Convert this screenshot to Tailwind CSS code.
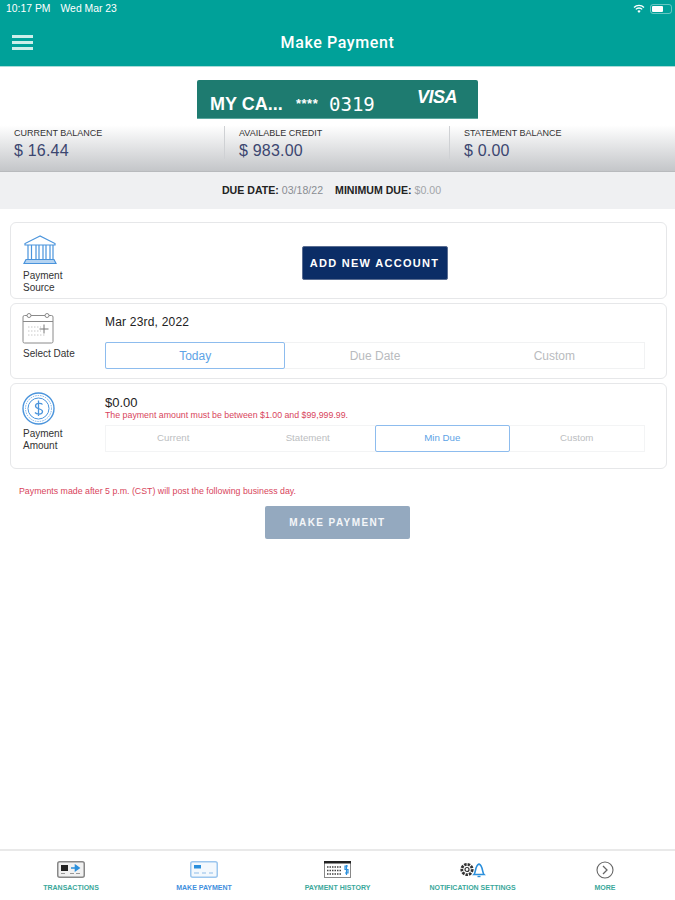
<!DOCTYPE html>
<html lang="en">
<head>
    <meta charset="UTF-8">
    <title>Make Payment</title>
    <script src="https://cdn.jsdelivr.net/npm/@tailwindcss/browser@4"></script>
</head>
<body class="bg-white font-['Liberation_Sans',sans-serif] text-[#1c1c1c]">
<div class="w-[675px] h-[900px] flex flex-col overflow-hidden">

    <!-- Header -->
    <header class="h-[67px] shrink-0 bg-[#00a199] border-b border-[#a9dcd8] text-white">
        <div class="h-[17px] pl-[6px] pr-[3px] flex items-center justify-between text-[10.400px]">
            <div class="flex gap-[10px]"><span>10:17 PM</span><span>Wed Mar 23</span></div>
            <div class="flex items-center gap-[5px]">
                <svg width="12" height="10" viewBox="0 0 12 10" fill="none" stroke="white" stroke-width="1.3"><path d="M1 3.5a7 7 0 0 1 10 0M2.8 5.4a4.4 4.4 0 0 1 6.4 0"/><path d="M4.400 7a2.200 2.200 0 0 1 3.200 0L6 9z" fill="white" stroke="none"/></svg>
                <div class="w-[22px] h-[10px] rounded-[3px] border border-white/40 p-[1px]"><div class="w-[11px] h-full bg-white rounded-[1px]"></div></div>
            </div>
        </div>
        <div class="relative h-[49px] flex items-center justify-center">
            <div class="absolute left-[12px] top-[18px] w-[21px] flex flex-col gap-[3px]">
                <div class="h-[3px] bg-[#cdeeea]"></div>
                <div class="h-[3px] bg-[#cdeeea]"></div>
                <div class="h-[3px] bg-[#cdeeea]"></div>
            </div>
            <h1 class="text-[16px] font-['Roboto',sans-serif] font-medium tracking-[0.6px] mt-[2px]">Make Payment</h1>
        </div>
    </header>

    <!-- Card -->
    <div class="pt-[13px] flex justify-center">
        <div class="w-[281px] h-[39px] bg-[#1e7b70] rounded-t-[2px] border-b border-[#5ba89f] text-white">
            <div class="h-full pl-[13px] pt-[10px] flex items-center">
                <span class="w-[86px] text-[18px] font-bold">MY CA...</span>
                <span class="w-[33px] text-[13px] font-bold tracking-[0.5px]">****</span>
                <span class="w-[88px] text-[19px] font-['DejaVu_Sans_Mono',monospace] font-extralight leading-none">0319</span>
                <span class="text-[18px] font-bold italic -mt-[14px] tracking-[-0.5px]">VISA</span>
            </div>
        </div>
    </div>

    <!-- Balances -->
    <div class="h-[53px] shrink-0 grid grid-cols-3 bg-linear-to-b from-white from-[12%] to-[#c4c6c9] border-b border-[#b8babd]">
        <div class="mt-[7px] h-[33px] pl-[14px] border-r border-[#cfd1d4]">
            <p class="text-[9px] leading-[14px] text-[#333]">CURRENT BALANCE</p>
            <p class="mt-[1px] text-[16px] leading-[20px] text-[#3b4670] tracking-[0.2px]">$ 16.44</p>
        </div>
        <div class="mt-[7px] h-[33px] pl-[14px] border-r border-[#cfd1d4]">
            <p class="text-[9px] leading-[14px] text-[#333]">AVAILABLE CREDIT</p>
            <p class="mt-[1px] text-[16px] leading-[20px] text-[#3b4670] tracking-[0.2px]">$ 983.00</p>
        </div>
        <div class="mt-[7px] h-[33px] pl-[14px]">
            <p class="text-[9px] leading-[14px] text-[#333]">STATEMENT BALANCE</p>
            <p class="mt-[1px] text-[16px] leading-[20px] text-[#3b4670] tracking-[0.2px]">$ 0.00</p>
        </div>
    </div>

    <!-- Due date -->
    <div class="h-[37px] shrink-0 bg-[#eff0f2] flex items-center justify-center pr-[12px] text-[10.600px] gap-[12px]">
        <span><b class="font-bold text-[#222]">DUE DATE:</b> <span class="text-[#8a8d92]">03/18/22</span></span>
        <span><b class="font-bold text-[#222]">MINIMUM DUE:</b> <span class="text-[#a2a5a9]">$0.00</span></span>
    </div>

    <!-- Form rows -->
    <div class="pt-[13px] pl-[10px] pr-[8px] flex flex-col gap-[4px]">

        <section class="h-[77px] rounded-[6px] border border-[#e6e7e9] flex">
            <div class="w-[94px] shrink-0 pl-[12px] pt-[12px]">
                <svg width="34" height="30" viewBox="0 0 34 30" fill="none" stroke="#4a94dc" stroke-width="1.200">
                    <path d="M17 1 2 8.500v1.500h30V8.500zM5 10v14M8.500 10v14M13 10v14M16 10v14M20 10v14M23 10v14M27 10v14M30 10v14"/>
                    <path d="M3 24.500h28L33 28.500H1z" fill="#b5d4f2"/>
                </svg>
                <p class="mt-[5px] text-[10px] leading-[11.500px] text-[#333]">Payment<br>Source</p>
            </div>
            <div class="flex-1 flex justify-center pt-[23px] pr-[22px]">
                <button class="w-[146px] h-[34px] bg-[#0b2d66] rounded-[2px] border border-[#5a6d91] text-white text-[11px] font-bold tracking-[1.300px]">ADD NEW ACCOUNT</button>
            </div>
        </section>

        <section class="h-[76px] rounded-[6px] border border-[#e6e7e9] flex">
            <div class="w-[94px] shrink-0 pl-[11px] pt-[8px]">
                <svg width="32" height="32" viewBox="0 0 32 32" fill="none" stroke="#8a8a8a" stroke-width="1">
                    <rect x="1" y="3.500" width="30" height="27.500" rx="1.500"/>
                    <path d="M1 9.500h30" />
                    <circle cx="7" cy="3.500" r="2" fill="white"/><circle cx="25" cy="3.500" r="2" fill="white"/>
                    <path d="M6 15h13M6 19h13M6 23h18" stroke="#c8c8c8" stroke-dasharray="1.500 1.500"/>
                    <path d="M22 12.500v9M17.500 17h9" stroke="#777"/>
                </svg>
                <p class="mt-[4px] pl-px text-[10px] leading-[11.500px] text-[#333]">Select Date</p>
            </div>
            <div class="flex-1 pt-[11px]">
                <p class="text-[12px] leading-[14px] text-[#222] tracking-[0.2px]">Mar 23rd, 2022</p>
                <div class="mt-[13px] w-[540px] h-[27px] grid grid-cols-3 border border-[#f1f2f3] text-[12px] text-[#b9bbbe]">
                    <div class="-my-px -ml-px flex items-center justify-center border border-[#8dbcee] rounded-[2px] bg-white text-[#5da3e6]">Today</div>
                    <div class="flex items-center justify-center">Due Date</div>
                    <div class="flex items-center justify-center">Custom</div>
                </div>
            </div>
        </section>

        <section class="h-[86px] rounded-[6px] border border-[#e6e7e9] flex">
            <div class="w-[94px] shrink-0 pl-[11px] pt-[8px]">
                <svg width="33" height="33" viewBox="0 0 33 33" fill="none" stroke="#4a94dc">
                    <circle cx="16.500" cy="16.500" r="15.500" stroke-width="1.400"/>
                    <circle cx="16.500" cy="16.500" r="13" stroke-width="0.700" stroke-dasharray="1.500 1"/>
                    <circle cx="16.500" cy="16.500" r="10.500" stroke-width="1"/>
                    <path d="M20.500 12.500c-1-1.500-7-2-7 1.500s7 2 7 5.500-6 3-7.500 1M16.500 8.500v15.500" stroke-width="1.300"/>
                </svg>
                <p class="mt-[3px] pl-px text-[10px] leading-[11.500px] text-[#333]">Payment<br>Amount</p>
            </div>
            <div class="flex-1 pt-[12px]">
                <p class="text-[13px] leading-[14px] font-medium text-[#222]">$0.00</p>
                <p class="text-[8.800px] leading-[10px] text-[#d8455c]">The payment amount must be between $1.00 and $99,999.99.</p>
                <div class="mt-[5px] w-[540px] h-[27px] grid grid-cols-4 border border-[#f3f4f5] text-[9.700px] text-[#bcbec1]">
                    <div class="flex items-center justify-center">Current</div>
                    <div class="flex items-center justify-center">Statement</div>
                    <div class="-my-px flex items-center justify-center border border-[#8dbcee] rounded-[2px] bg-white text-[#5da3e6]">Min Due</div>
                    <div class="flex items-center justify-center">Custom</div>
                </div>
            </div>
        </section>
    </div>

    <p class="mt-[17px] pl-[19px] text-[8.800px] leading-[10px] text-[#d8455c]">Payments made after 5 p.m. (CST) will post the following business day.</p>

    <div class="mt-[10px] flex justify-center">
        <button class="w-[145px] h-[33px] bg-[#94a9bf] rounded-[2px] text-white/90 text-[10px] font-bold tracking-[1.400px]">MAKE PAYMENT</button>
    </div>

    <!-- Tab bar -->
    <nav class="mt-auto h-[51px] shrink-0 border-t-2 border-[#e9e9e9] grid grid-cols-5 text-[7px] font-bold text-[#3aa89b] text-center">
        <div class="flex flex-col items-center pt-[10px] pl-[7px]">
            <svg width="28" height="17" viewBox="0 0 28 17" fill="none">
                <rect x="0.750" y="0.750" width="26.500" height="15.500" rx="2" fill="#f1f1f1" stroke="#888" stroke-width="1.500"/>
                <rect x="4" y="4" width="7" height="6" fill="#222"/>
                <path d="M14 7h5M18.500 4.500l3.500 2.500-3.500 2.500z" stroke="#2a8fdc" stroke-width="1.600" fill="#2a8fdc"/>
                <path d="M4 12.500h4M13 12.500h4M19 12.500h4" stroke="#999"/>
            </svg>
            <span class="mt-[5px] leading-[10px]">TRANSACTIONS</span>
        </div>
        <div class="flex flex-col items-center pt-[10px] pl-[3px] text-[#3f8fdd]">
            <svg width="28" height="17" viewBox="0 0 28 17" fill="none">
                <rect x="0.750" y="0.750" width="26.500" height="15.500" rx="2" fill="#f3f8fd" stroke="#9cc6ee" stroke-width="1.500"/>
                <rect x="4" y="4" width="7" height="3.500" fill="#2a8fdc"/>
                <path d="M4 12h5M12 12h4M19 12h4" stroke="#8fbde8"/>
            </svg>
            <span class="mt-[5px] leading-[10px]">MAKE PAYMENT</span>
        </div>
        <div class="flex flex-col items-center pt-[10px]">
            <svg width="27" height="17" viewBox="0 0 27 17" fill="none">
                <rect x="0.500" y="0.500" width="26" height="16" fill="white" stroke="#888"/>
                <rect x="0" y="0" width="27" height="2.500" fill="#222"/>
                <path d="M3 6h14M3 9.500h14M3 13h14" stroke="#444" stroke-width="1.500" stroke-dasharray="1.500 1"/>
                <path d="M24 5h-3v3.500h3v3.500h-3M22.500 4v10" stroke="#2a8fdc" stroke-width="1.200"/>
            </svg>
            <span class="mt-[5px] leading-[10px]">PAYMENT HISTORY</span>
        </div>
        <div class="flex flex-col items-center pt-[10px]">
            <svg width="28" height="17" viewBox="0 0 28 17" fill="none">
                <circle cx="8" cy="8.500" r="5.200" stroke="#333" stroke-width="2.800" stroke-dasharray="2.500 1"/>
                <circle cx="8" cy="8.500" r="2" stroke="#333" stroke-width="1.200"/>
                <path d="M15 13.500c2-2 1-9 5-10.500 4 1.500 3 8.500 5 10.500z" stroke="#2a8fdc" stroke-width="1.600"/>
                <path d="M18.500 15.500h3" stroke="#2a8fdc" stroke-width="1.400"/>
            </svg>
            <span class="mt-[5px] leading-[10px]">NOTIFICATION SETTINGS</span>
        </div>
        <div class="flex flex-col items-center pt-[10px] pr-[5px]">
            <svg width="18" height="18" viewBox="0 0 18 18" fill="none" stroke="#666" stroke-width="1.100">
                <circle cx="9" cy="9" r="8"/>
                <path d="M7 5l4 4-4 4" stroke-width="1.300"/>
            </svg>
            <span class="mt-[4px] leading-[10px]">MORE</span>
        </div>
    </nav>
</div>
</body>
</html>
